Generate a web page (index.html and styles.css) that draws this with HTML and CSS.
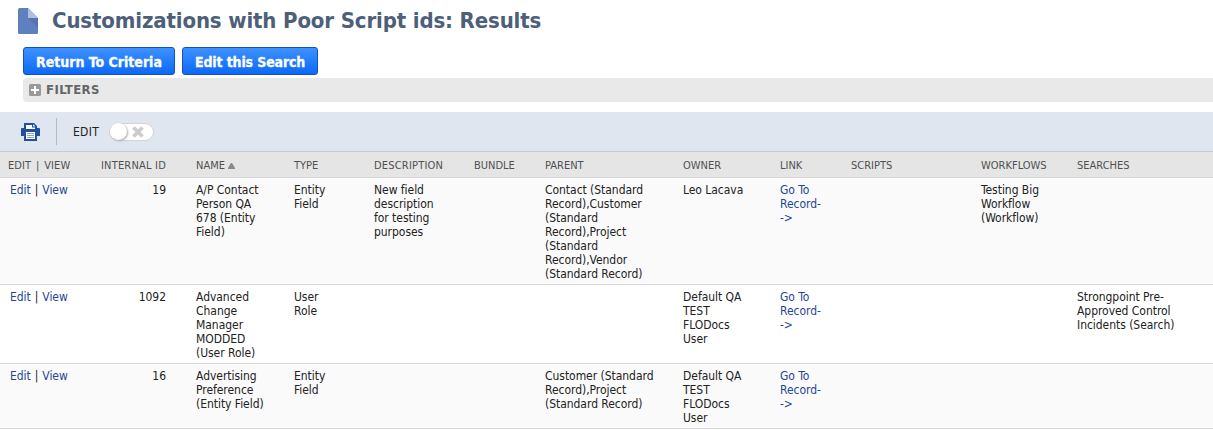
FILE: index.html
```html
<!DOCTYPE html>
<html lang="en">
<head>
<meta charset="utf-8">
<title>Customizations with Poor Script ids: Results</title>
<link rel="stylesheet" href="styles.css">
</head>
<body>
<header class="page-head">
  <svg class="doc-icon" width="20" height="26" viewBox="0 0 20 26">
    <path d="M1.500 0H10L20 10V24.500Q20 26 18.500 26H1.500Q0 26 0 24.500V1.500Q0 0 1.500 0Z" fill="#607fbf"/>
    <path d="M10 10H20V20Z" fill="#5674b2"/>
    <path d="M10 0L20 10H10Z" fill="#b0bfdf"/>
  </svg>
  <h1 class="title">Customizations with Poor Script ids: Results</h1>
</header>
<div class="actions">
  <button class="btn btn-return"><span>Return To Criteria</span></button>
  <button class="btn btn-edit"><span>Edit this Search</span></button>
</div>
<div class="filters">
  <svg width="12" height="12" viewBox="0 0 12 12"><rect width="12" height="12" rx="1.500" fill="#999"/><path d="M6 2V10M2 6H10" stroke="#fff" stroke-width="2"/></svg>
  <span>FILTERS</span>
</div>
<div class="toolbar">
  <svg class="printer" width="19" height="18" viewBox="0 0 19 18">
    <path d="M3 5V0H13L16 3V5H18Q19 5 19 6V13H16V18H3V13H0V6Q0 5 1 5Z" fill="#1f4f9f"/>
    <path d="M5 2H11V4.500H14V6H5Z" fill="#fff"/>
    <path d="M12 1.200L14.500 3.500H12Z" fill="#fff"/>
    <path d="M5 9H14V16H5Z" fill="#fff"/>
    <path d="M6 10.500H13M6 12.500H13M6 14.500H13" stroke="#8ba5d0"/>
  </svg>
  <span class="divider"></span>
  <span class="toggle-label">EDIT</span>
  <span class="toggle"><span class="knob"></span><svg width="12" height="12" viewBox="0 0 12 12"><path d="M1.500 1.500L10.500 10.500M10.500 1.500L1.500 10.500" stroke="#ccc" stroke-width="3.800"/></svg></span>
</div>
<table class="results">
  <colgroup><col class="c-action"><col class="c-id"><col class="c-name"><col class="c-type"><col class="c-desc"><col class="c-bundle"><col class="c-parent"><col class="c-owner"><col class="c-link"><col class="c-scripts"><col class="c-flows"><col class="c-searches"></colgroup>
  <thead>
    <tr><th class="first">EDIT | VIEW</th><th class="num wide">INTERNAL ID</th><th>NAME <svg width="7" height="6" viewBox="0 0 7 6"><path d="M3 0H4L7 5V6H0V5Z" fill="#888"/></svg></th><th>TYPE</th><th class="wide">DESCRIPTION</th><th>BUNDLE</th><th>PARENT</th><th>OWNER</th><th>LINK</th><th>SCRIPTS</th><th>WORKFLOWS</th><th>SEARCHES</th></tr>
  </thead>
  <tbody>
    <tr>
      <td class="action"><a>Edit</a> | <a>View</a></td><td class="num">19</td>
      <td>A/P Contact<br>Person QA<br>678 (Entity<br>Field)</td><td>Entity<br>Field</td>
      <td>New field<br>description<br>for testing<br>purposes</td><td></td>
      <td>Contact (Standard<br>Record),Customer<br>(Standard<br>Record),Project<br>(Standard<br>Record),Vendor<br>(Standard Record)</td>
      <td>Leo Lacava</td><td><a>Go To<br>Record-<br>-&gt;</a></td><td></td>
      <td>Testing Big<br>Workflow<br>(Workflow)</td><td></td>
    </tr>
    <tr>
      <td class="action"><a>Edit</a> | <a>View</a></td><td class="num">1092</td>
      <td>Advanced<br>Change<br>Manager<br>MODDED<br>(User Role)</td><td>User<br>Role</td>
      <td></td><td></td><td></td>
      <td>Default QA<br>TEST<br>FLODocs<br>User</td><td><a>Go To<br>Record-<br>-&gt;</a></td><td></td>
      <td></td><td>Strongpoint Pre-<br>Approved Control<br>Incidents (Search)</td>
    </tr>
    <tr>
      <td class="action"><a>Edit</a> | <a>View</a></td><td class="num">16</td>
      <td>Advertising<br>Preference<br>(Entity Field)</td><td>Entity<br>Field</td>
      <td></td><td></td>
      <td>Customer (Standard<br>Record),Project<br>(Standard Record)</td>
      <td>Default QA<br>TEST<br>FLODocs<br>User</td><td><a>Go To<br>Record-<br>-&gt;</a></td><td></td>
      <td></td><td></td>
    </tr>
  </tbody>
</table>
</body>
</html>
```
FILE: styles.css
```css
* { box-sizing: border-box; }
body {
  margin: 0;
  background: #fff;
  color: #222;
  font: 12px/14px Tahoma, "DejaVu Sans Condensed", "DejaVu Sans", sans-serif;
  font-stretch: condensed;
  letter-spacing: -0.04px;
  white-space: nowrap;
  overflow: hidden;
}
svg { display: block; flex: none; }
.page-head { display: flex; height: 47px; padding: 8px 0 0 18px; gap: 14px; }
.title { margin: 0; font-size: 22px; line-height: 26px; font-weight: bold; color: #4d5f79; letter-spacing: -0.14px; }
.actions { display: flex; gap: 7px; height: 31px; padding-left: 23px; }
.btn {
  height: 28px;
  padding: 1px 0 0 12px;
  border: 1px solid #1350b8;
  border-radius: 3px;
  background: linear-gradient(#3d92ff, #0c68f8);
  color: #fff;
  font: bold 14px/26px Tahoma, "DejaVu Sans Condensed", "DejaVu Sans", sans-serif;
  font-stretch: condensed;
  -webkit-text-stroke: 0.3px #fff;
  text-align: left;
}
.btn-return { width: 152px; letter-spacing: 0; }
.btn-edit { width: 136px; letter-spacing: -0.13px; }
.filters {
  display: flex;
  align-items: center;
  gap: 5px;
  height: 24px;
  margin: 0 0 10px 23px;
  padding-left: 6px;
  border-radius: 4px 0 0 4px;
  background: #e9e9e9;
  color: #666;
  font-size: 13px;
  font-weight: bold;
  letter-spacing: 0.4px;
}
.toolbar { display: flex; align-items: center; height: 39px; padding-left: 21px; background: #dfe6ef; }
.divider { width: 1px; height: 27px; margin: 0 16px; background: #b5b9c0; }
.toggle-label { width: 36px; padding-top: 1px; letter-spacing: 0.3px; }
.toggle {
  display: flex;
  align-items: center;
  gap: 5px;
  width: 45px;
  height: 18px;
  border: 1px solid #d2d2d2;
  border-radius: 9px;
  background: #fff;
}
.knob { width: 17px; height: 17px; border-radius: 50%; background: #fff; box-shadow: 1px 1px 2px #aaa; }
.results { width: 1213px; table-layout: fixed; border-collapse: separate; border-spacing: 0; }
.c-action { width: 80px; }
.c-id { width: 116px; }
.c-name { width: 98px; }
.c-type { width: 80px; }
.c-desc { width: 100px; }
.c-bundle { width: 71px; }
.c-parent { width: 138px; }
.c-owner { width: 97px; }
.c-link { width: 71px; }
.c-scripts { width: 130px; }
.c-flows { width: 96px; }
.c-searches { width: 136px; }
th {
  height: 27px;
  padding: 2px 0 0;
  border-top: 1px solid #c7c9cb;
  border-bottom: 1px solid #d8d8d8;
  background: #e5e5e5;
  color: #505050;
  font-size: 11px;
  font-weight: normal;
  letter-spacing: 0;
  text-align: left;
}
th svg { display: inline-block; }
th.wide { letter-spacing: 0.2px; }
td { padding: 5px 0 3px; border-bottom: 1px solid #d9d9d9; vertical-align: top; }
tbody tr:nth-child(odd) { background: #fafafa; }
.first { padding-left: 8px; word-spacing: 1.5px; letter-spacing: 0.1px; }
.action { padding-left: 10px; word-spacing: 0.6px; }
.num { padding-right: 30px; text-align: right; }
a { color: #1f4796; }
```
